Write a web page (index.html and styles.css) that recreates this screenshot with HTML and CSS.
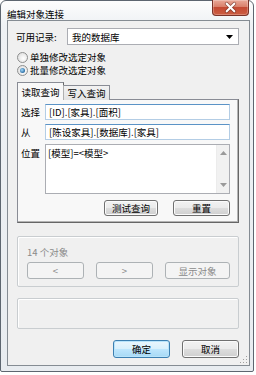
FILE: index.html
```html
<!DOCTYPE html>
<html lang="zh-CN">

<head>
  <meta charset="UTF-8">
  <meta name="viewport" content="width=device-width, initial-scale=1.0">
  <title>编辑对象连接</title>
  <link rel="stylesheet" href="styles.css">
</head>

<body>
  <div class="window">
    <header class="titlebar">
      <span class="title">编辑对象连接</span>
      <button class="close" aria-label="关闭">
        <svg width="37" height="15" viewBox="0 0 37 15">
          <path d="M14.5 3.5 L22.5 11.5 M22.5 3.5 L14.5 11.5" stroke="#5a2a22" stroke-width="4" stroke-linecap="round" opacity="0.55" />
          <path d="M14.5 3.5 L22.5 11.5 M22.5 3.5 L14.5 11.5" stroke="#fff" stroke-width="2.2" stroke-linecap="round" />
        </svg>
      </button>
    </header>

    <main class="client">
      <div class="source-row">
        <label class="source-label" for="source">可用记录:</label>
        <div class="combo" id="source">
          <span>我的数据库</span>
          <svg class="combo-arrow" width="7" height="4" viewBox="0 0 7 4"><path d="M0 0 H7 L3.5 4 Z" fill="#000" /></svg>
        </div>
      </div>

      <div class="radios">
        <label class="radio-row"><span class="radio"></span>单独修改选定对象</label>
        <label class="radio-row"><span class="radio checked"></span>批量修改选定对象</label>
      </div>

      <div class="tabs">
        <span class="tab active">读取查询</span>
        <span class="tab">写入查询</span>
      </div>
      <section class="tab-panel">
        <div class="field">
          <span class="field-label">选择</span>
          <div class="textbox">[ID].[家具].[面积]</div>
        </div>
        <div class="field">
          <span class="field-label">从</span>
          <div class="textbox">[陈设家具].[数据库].[家具]</div>
        </div>
        <div class="field field-tall">
          <span class="field-label">位置</span>
          <div class="memo">
            <div class="memo-text">[模型]=&lt;模型&gt;</div>
            <div class="scrollbar">
              <svg width="7" height="4" viewBox="0 0 7 4"><path d="M0 4 H7 L3.5 0 Z" fill="#9a9a9a" /></svg>
              <svg width="7" height="4" viewBox="0 0 7 4"><path d="M0 0 H7 L3.5 4 Z" fill="#9a9a9a" /></svg>
            </div>
          </div>
        </div>
        <div class="panel-buttons">
          <button class="btn btn-test">测试查询</button>
          <button class="btn btn-reset">重置</button>
        </div>
      </section>

      <section class="group objects">
        <div class="count">14 个对象</div>
        <div class="nav">
          <button class="btn disabled">&lt;</button>
          <button class="btn disabled">&gt;</button>
          <button class="btn disabled wide">显示对象</button>
        </div>
      </section>

      <section class="group blank"></section>

      <footer class="footer">
        <button class="btn default">确定</button>
        <button class="btn">取消</button>
      </footer>

      <svg class="grip" width="8" height="8" viewBox="0 0 8 8">
        <rect x="6" y="0" width="1" height="1" fill="#a0a0a0" />
        <rect x="3" y="3" width="1" height="1" fill="#a0a0a0" />
        <rect x="6" y="3" width="1" height="1" fill="#a0a0a0" />
        <rect x="0" y="6" width="1" height="1" fill="#a0a0a0" />
        <rect x="3" y="6" width="1" height="1" fill="#a0a0a0" />
        <rect x="6" y="6" width="1" height="1" fill="#a0a0a0" />
      </svg>
    </main>
  </div>
</body>

</html>
```

FILE: styles.css
```css
* {
  box-sizing: border-box;
}

body {
  margin: 0;
  background: #fff;
  font-family: "Noto Sans CJK SC", sans-serif;
  font-size: 9.5px;
  line-height: 12px;
  color: #000;
}

button {
  font: inherit;
  color: inherit;
  margin: 0;
  padding: 0;
}

.window {
  width: 254px;
  height: 372px;
  border: 1px solid #5d6670;
  border-radius: 6px 6px 2px 2px;
  background: linear-gradient(#fdfdfd, #eef1f4 24px, #e8ecf0);
  padding: 0 3px 5px 6px;
  display: flex;
  flex-direction: column;
}

.titlebar {
  height: 19px;
  display: flex;
  align-items: flex-start;
  justify-content: space-between;
}

.title {
  padding-top: 7px;
}

.close {
  width: 37px;
  height: 16px;
  margin: -1px 1px 0 0;
  border: 1px solid #7a3328;
  border-top: 0;
  border-radius: 0 0 4px 4px;
  background: linear-gradient(#eaa998 0%, #d9806b 45%, #c44a33 50%, #cc5e42 100%);
  box-shadow: inset 0 0 0 1px rgb(255 255 255 / 0.25);
  display: flex;
}

.client {
  position: relative;
  flex: 1;
  border: 1px solid #858c93;
  background: #f0f0f0;
  padding: 0 10px 7px 8px;
  display: flex;
  flex-direction: column;
}

/* record source */
.source-row {
  margin-top: 7px;
  display: flex;
  align-items: center;
}

.source-label {
  width: 51px;
}

.combo {
  flex: 1;
  height: 17px;
  border: 1px solid #abadb3;
  background: #fff;
  padding: 0 5px 0 4px;
  display: flex;
  align-items: center;
  justify-content: space-between;
}

.radios {
  margin-top: 6px;
  display: flex;
  flex-direction: column;
}

.radio-row {
  height: 13px;
  line-height: 13px;
  display: flex;
  align-items: center;
  gap: 2px;
}

.radio {
  width: 11px;
  height: 11px;
  margin-left: 1px;
  border: 1px solid #8e8f8f;
  border-radius: 50%;
  background: radial-gradient(circle at 60% 60%, #fff, #d8d8d8);
  display: flex;
  align-items: center;
  justify-content: center;
}

.radio.checked::after {
  content: '';
  width: 5px;
  height: 5px;
  border-radius: 50%;
  background: radial-gradient(circle at 40% 40%, #a6dbfc, #2a6ca3 70%);
}

/* tabs */
.tabs {
  margin: 5px 0 -1px 1px;
  height: 18px;
  display: flex;
  align-items: flex-end;
  position: relative;
  z-index: 1;
}

.tab {
  width: 47px;
  height: 15px;
  border: 1px solid #898c95;
  border-bottom: 0;
  background: linear-gradient(#f2f2f2, #e3e3e3);
  text-align: center;
  line-height: 14px;
}

.tab + .tab {
  margin-left: -1px;
  border-left-color: #b0b0b0;
}

.tab.active {
  height: 18px;
  padding-top: 2px;
  background: #f8f8f8;
  border-right-color: #696969;
}

.tab-panel {
  margin-left: 1px;
  height: 124px;
  border: 1px solid #898c95;
  border-right-color: #666;
  border-bottom-color: #666;
  box-shadow: inset -1px -1px 0 #b4b4b4;
  background: #f8f8f8;
  padding: 4px 8px 6px 3px;
  display: flex;
  flex-direction: column;
  gap: 4px;
}

.field {
  display: flex;
  align-items: center;
}

.field-tall {
  align-items: flex-start;
}

.field-label {
  width: 24px;
  flex: none;
}

.field-tall .field-label {
  padding-top: 3px;
}

.textbox {
  flex: 1;
  height: 16px;
  border: 1px solid #b3cde5;
  border-top-color: #5b93c6;
  background: #fff;
  padding: 0 3px;
  display: flex;
  align-items: center;
  white-space: nowrap;
}

.memo {
  flex: 1;
  height: 50px;
  border: 1px solid #abadb3;
  background: #fff;
  display: flex;
}

.memo-text {
  flex: 1;
  padding: 2px 2px;
}

.scrollbar {
  width: 13px;
  background: #f1f1f1;
  border-left: 1px solid #ececec;
  padding: 6px 0;
  display: flex;
  flex-direction: column;
  align-items: center;
  justify-content: space-between;
}

.panel-buttons {
  margin-top: 2px;
  display: flex;
  justify-content: flex-end;
  gap: 15px;
}

/* buttons */
.btn {
  height: 16px;
  border: 1px solid #707070;
  border-radius: 3px;
  background: linear-gradient(#f2f2f2 0%, #ebebeb 48%, #dddddd 52%, #cfcfcf 100%);
  box-shadow: inset 0 0 0 1px #fbfbfb;
  line-height: 12px;
}

.btn-test {
  width: 54px;
}

.btn-reset {
  width: 57px;
}

.btn.disabled {
  width: 57px;
  height: 17px;
  border-color: #adb2b5;
  background: #f4f4f4;
  box-shadow: none;
  color: #8a8a8a;
}

.btn.wide {
  width: 65px;
}

.btn.default {
  border-color: #3c7fb1;
  background: linear-gradient(#eaf6fd 0%, #d9f0fc 48%, #bee6fd 52%, #a7d9f5 100%);
  box-shadow: inset 0 0 0 1px #b9e4fb;
}

/* group boxes */
.group {
  margin-left: 1px;
  border: 1px solid #c9cdd0;
  border-radius: 2px;
  box-shadow: inset 1px 1px 0 #fff;
}

.objects {
  margin-top: 13px;
  height: 51px;
  padding: 9px 8px 0 9px;
}

.count {
  height: 12px;
  color: #8a8a8a;
}

.nav {
  margin-top: 4px;
  display: flex;
  gap: 12px;
}

.blank {
  margin-top: 11px;
  height: 31px;
}

.footer {
  margin-top: 11px;
  display: flex;
  justify-content: flex-end;
  gap: 12px;
}

.footer .btn {
  width: 57px;
  height: 18px;
}

.grip {
  position: absolute;
  right: 1px;
  bottom: 1px;
}
```
